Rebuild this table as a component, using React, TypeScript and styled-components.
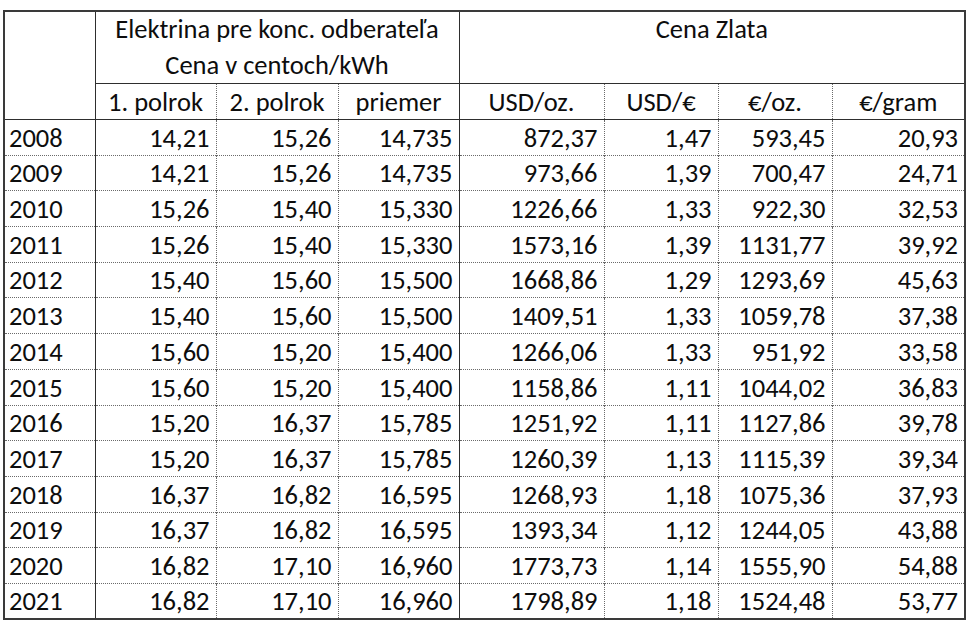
import styled, { createGlobalStyle, css } from "styled-components";

type Row = { year: number; values: string[] };

const rows: Row[] = [
  { year: 2008, values: ["14,21", "15,26", "14,735", "872,37", "1,47", "593,45", "20,93"] },
  { year: 2009, values: ["14,21", "15,26", "14,735", "973,66", "1,39", "700,47", "24,71"] },
  { year: 2010, values: ["15,26", "15,40", "15,330", "1226,66", "1,33", "922,30", "32,53"] },
  { year: 2011, values: ["15,26", "15,40", "15,330", "1573,16", "1,39", "1131,77", "39,92"] },
  { year: 2012, values: ["15,40", "15,60", "15,500", "1668,86", "1,29", "1293,69", "45,63"] },
  { year: 2013, values: ["15,40", "15,60", "15,500", "1409,51", "1,33", "1059,78", "37,38"] },
  { year: 2014, values: ["15,60", "15,20", "15,400", "1266,06", "1,33", "951,92", "33,58"] },
  { year: 2015, values: ["15,60", "15,20", "15,400", "1158,86", "1,11", "1044,02", "36,83"] },
  { year: 2016, values: ["15,20", "16,37", "15,785", "1251,92", "1,11", "1127,86", "39,78"] },
  { year: 2017, values: ["15,20", "16,37", "15,785", "1260,39", "1,13", "1115,39", "39,34"] },
  { year: 2018, values: ["16,37", "16,82", "16,595", "1268,93", "1,18", "1075,36", "37,93"] },
  { year: 2019, values: ["16,37", "16,82", "16,595", "1393,34", "1,12", "1244,05", "43,88"] },
  { year: 2020, values: ["16,82", "17,10", "16,960", "1773,73", "1,14", "1555,90", "54,88"] },
  { year: 2021, values: ["16,82", "17,10", "16,960", "1798,89", "1,18", "1524,48", "53,77"] },
];

const subHeads = ["1. polrok", "2. polrok", "priemer", "USD/oz.", "USD/€", "€/oz.", "€/gram"];
const colWidths = [91, 121, 122, 121, 145, 114, 114, 133];

// columns after which a solid divider sits (priemer closes the electricity group)
const solidAfter = new Set([2]);

export default function App() {
  return (
    <>
      <GlobalStyle />
      <Page>
        <Sheet>
          <colgroup>
            {colWidths.map((w, i) => (
              <col key={i} style={{ width: w }} />
            ))}
          </colgroup>
          <thead>
            <GroupRow>
              <Corner rowSpan={2} />
              <GroupCell colSpan={3}>
                Elektrina pre konc. odberateľa
                <br />
                Cena v centoch/kWh
              </GroupCell>
              <GroupCell colSpan={4}>Cena Zlata</GroupCell>
            </GroupRow>
            <SubRow>
              {subHeads.map((h, i) => (
                <SubCell key={h} $solid={solidAfter.has(i)} $last={i === subHeads.length - 1}>
                  {h}
                </SubCell>
              ))}
            </SubRow>
          </thead>
          <tbody>
            {rows.map((r) => (
              <DataRow key={r.year}>
                <YearCell>{r.year}</YearCell>
                {r.values.map((v, i) => (
                  <NumCell key={i} $solid={solidAfter.has(i)} $last={i === r.values.length - 1}>
                    {v}
                  </NumCell>
                ))}
              </DataRow>
            ))}
          </tbody>
        </Sheet>
      </Page>
    </>
  );
}

const GlobalStyle = createGlobalStyle`
  html, body {
    margin: 0;
    padding: 0;
    background: #ffffff;
  }
  body {
    font-family: Carlito, Lato, "Liberation Sans", sans-serif;
    color: #0d0d0d;
  }
`;

const Page = styled.div`
  width: 968px;
  height: 629px;
  padding: 10px 0 0 3px;
  box-sizing: border-box;
  overflow: hidden;
`;

const solidLine = "1px solid #2e2e2e";
const dotLine = "1px dotted #6a6a6a";

const Sheet = styled.table`
  border-collapse: collapse;
  table-layout: fixed;
  width: 961px;
  border: 2px solid #3a3a3a;
  font-size: 26.5px;
`;

const GroupRow = styled.tr`
  height: 71px;
`;

const Corner = styled.th`
  border-right: ${solidLine};
  border-bottom: ${solidLine};
`;

const GroupCell = styled.th`
  font-weight: 400;
  vertical-align: top;
  text-align: center;
  line-height: 35.5px;
  padding: 0;
  border-right: ${solidLine};
  border-bottom: ${solidLine};
`;

const SubRow = styled.tr`
  height: 36px;
`;

const edge = css<{ $solid: boolean; $last: boolean }>`
  border-right: ${(p) => (p.$last ? "none" : p.$solid ? solidLine : dotLine)};
`;

const SubCell = styled.th<{ $solid: boolean; $last: boolean }>`
  font-weight: 400;
  text-align: center;
  vertical-align: bottom;
  line-height: 28px;
  padding: 0 0 3px;
  border-bottom: ${solidLine};
  ${edge}
`;

const DataRow = styled.tr`
  height: 35.7px;

  & + & > td {
    border-top: ${dotLine};
  }
`;

const YearCell = styled.td`
  text-align: left;
  vertical-align: bottom;
  line-height: 28px;
  padding: 0 0 3px 4px;
  border-right: ${solidLine};
`;

const NumCell = styled.td<{ $solid: boolean; $last: boolean }>`
  text-align: right;
  vertical-align: bottom;
  line-height: 28px;
  padding: 0 6px 3px 0;
  ${edge}
`;
